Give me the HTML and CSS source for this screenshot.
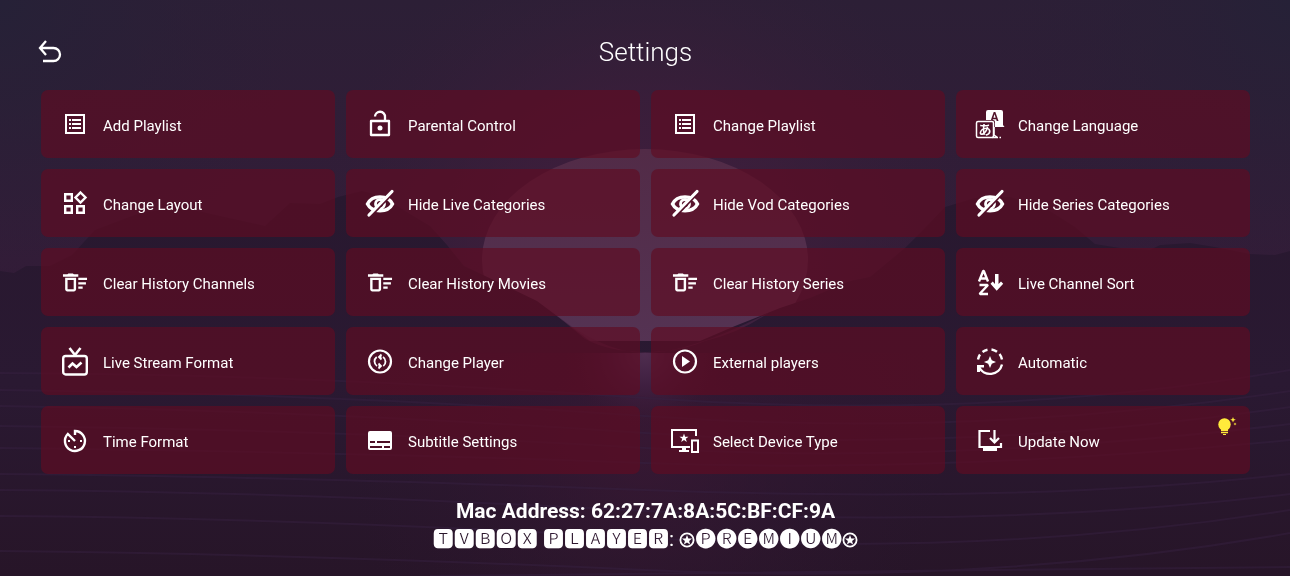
FILE: index.html
```html
<!DOCTYPE html>
<html lang="en">
<head>
<meta charset="utf-8">
<title>Settings</title>
<link rel="stylesheet" href="styles.css">
</head>
<body>
<svg class="scene" viewBox="0 0 1290 576" preserveAspectRatio="none" aria-hidden="true">
  <defs>
    <linearGradient id="sky" x1="0" y1="0" x2="0" y2="1"><stop offset="0" stop-color="#2c1f36"/><stop offset=".45" stop-color="#331c38"/><stop offset="1" stop-color="#2a1830"/></linearGradient>
    <radialGradient id="glow" gradientUnits="userSpaceOnUse" cx="645" cy="270" r="340"><stop offset="0" stop-color="#471e42"/><stop offset=".5" stop-color="#3d1e3b" stop-opacity=".7"/><stop offset="1" stop-color="#331e37" stop-opacity="0"/></radialGradient>
    <linearGradient id="sun" x1="0" y1="0" x2="0" y2="1"><stop offset="0" stop-color="#522b47"/><stop offset="1" stop-color="#553455"/></linearGradient>
    <linearGradient id="land" x1="0" y1="0" x2="0" y2="1"><stop offset="0" stop-color="#28182f"/><stop offset=".5" stop-color="#2a1932"/><stop offset="1" stop-color="#271528"/></linearGradient>
    <radialGradient id="water" gradientUnits="userSpaceOnUse" cx="645" cy="354" r="80"><stop offset="0" stop-color="#4f2d4f"/><stop offset=".4" stop-color="#3f1f40"/><stop offset="1" stop-color="#361730" stop-opacity="0"/></radialGradient>
    <radialGradient id="shore" gradientUnits="userSpaceOnUse" cx="645" cy="440" r="300"><stop offset="0" stop-color="#3a1834" stop-opacity=".8"/><stop offset="1" stop-color="#2d1630" stop-opacity="0"/></radialGradient>
    <radialGradient id="cornerL" gradientUnits="userSpaceOnUse" cx="0" cy="0" r="300"><stop offset="0" stop-color="#262137"/><stop offset="1" stop-color="#2b1f37" stop-opacity="0"/></radialGradient>
    <radialGradient id="cornerR" gradientUnits="userSpaceOnUse" cx="1290" cy="0" r="300"><stop offset="0" stop-color="#262137"/><stop offset="1" stop-color="#2b1f37" stop-opacity="0"/></radialGradient>
  </defs>
  <rect width="1290" height="576" fill="url(#sky)"/>
  <rect width="1290" height="576" fill="url(#glow)"/>
  <rect width="1290" height="576" fill="url(#cornerL)"/>
  <rect width="1290" height="576" fill="url(#cornerR)"/>
  <ellipse cx="645" cy="260" rx="163" ry="111" fill="url(#sun)"/>
  <path fill="url(#land)" d="M0 271L14 273 26 266 50 266 72 255 95 230 140 213 180 207 220 216 265 226 290 203 320 204 338 197 362 191 382 196 405 211 430 226 447 245 464 266 500 283 537 301 565 322 590 341H700L735 326 765 314 780 308 810 298 850 281 870 277 905 248 925 228 945 207 975 198 1010 197 1045 208 1075 227 1095 244 1120 248 1150 250 1160 245 1190 243 1215 247 1250 254 1275 255 1290 251V576H0z"/>
  <path fill="#4d2647" d="M545 306Q600 353 645 353T770 312Q740 333 705 341 680 352 645 352T585 339z" opacity=".6"/>
  <rect y="353" width="1290" height="223" fill="url(#shore)"/>
  <rect y="353" width="1290" height="223" fill="url(#water)"/>
  <g class="waves">
    <path d="M0 373Q300 374 645 398T1290 370M0 390Q320 393 645 416T1290 391M0 406Q330 411 645 433T1290 407M0 426Q350 430 645 448T1290 424M0 448Q350 452 645 463T1290 440M0 474Q260 476 645 490T1290 474M0 490Q300 492 645 511T1290 494M0 516Q300 518 645 538T1290 510M0 551Q300 554 645 570T1290 533M430 576Q860 572 1290 567"/>
  </g>
</svg>

<svg class="sprite" aria-hidden="true">
  <symbol id="i-list" viewBox="0 0 28 28"><path d="M5 5h18v18H5z" class="line" stroke-width="2"/><path d="M8 9h2v2H8zM11 9h9v2h-9zM8 13h2v2H8zM11 13h9v2h-9zM8 17h2v2H8zM11 17h9v2h-9z"/></symbol>
  <symbol id="i-eye" viewBox="0 0 30 30"><path d="M2.500 16C7 6.500 23 6.500 27.500 16 23 25 7 25 2.500 16z" class="line" stroke-width="3.400"/><circle cx="15" cy="16" r="4.500" class="line" stroke-width="2.800"/><path d="M5.500 28.500L28 5" stroke="#541029" stroke-width="2.500"/><path d="M4 27L27 3.500" class="line" stroke-width="3.200" stroke-linecap="round"/></symbol>
  <symbol id="i-clear" viewBox="-0.800 -1 25.600 25.600"><path d="M15 16h4v2h-4zm0-8h8v2h-8zm0 4h7v2h-7zM3 18.500c0 1.100.9 2 2 2h6c1.100 0 2-.9 2-2V8H3zm2.200-8.500h5.600v8.400H5.200zm4.800-6H6L5 4.600H1v2.400h14V4.600h-4z"/></symbol>
  <symbol id="i-star" viewBox="0 0 16 16"><circle cx="8" cy="8" r="6.600" class="line" stroke-width="1.800"/><path d="M8 3l1.300 3.500 3.700.1-2.900 2.300 1 3.600L8 10.400l-3.100 2.100 1-3.600L3 6.600l3.700-.1z"/></symbol>
</svg>

<main class="page">
  <header class="top">
    <button class="back" type="button" aria-label="Back"><svg viewBox="0 0 26 26"><path d="M9 2L3 9l6 7M3 9h13.500a6.500 6.500 0 0 1 0 13H6" class="line" stroke-width="2.300"/></svg></button>
    <h1 class="title">Settings</h1>
  </header>

  <div class="grid">
    <button class="card" type="button"><svg class="icon"><use href="#i-list"/></svg><span class="label">Add Playlist</span></button>
    <button class="card" type="button"><svg class="icon" viewBox="0 0 28 28"><path d="M5 11h18v14H5zM9 6.500a4.800 4.800 0 0 1 10 .5v4" class="line" stroke-width="2.300" stroke-linejoin="round"/><circle cx="14" cy="18" r="2.500"/></svg><span class="label">Parental Control</span></button>
    <button class="card" type="button"><svg class="icon"><use href="#i-list"/></svg><span class="label">Change Playlist</span></button>
    <button class="card" type="button"><svg class="icon wide" viewBox="0 0 30 30"><path d="M13 1h13q2 0 2 2v13l1.500 2H20v-5q0-2-2-2h-7V3q0-2 2-2z"/><text x="19.500" y="12" class="ink">A</text><rect x="1.500" y="12.500" width="17" height="16" rx="1.500" class="line" stroke-width="1.500"/><text x="10" y="25" class="kana">あ</text><path d="M19 18v8l3 2M17 28.500h6M24.500 28.500h1.500" class="line" stroke-width="1.500"/></svg><span class="label">Change Language</span></button>

    <button class="card" type="button"><svg class="icon" viewBox="0 0 28 28"><path d="M4.200 5.200h6.600v6.600H4.200zM4.200 17.200h6.600v6.600H4.200zM16.200 17.200h6.600v6.600h-6.600zM19.500 3.500l5 5-5 5-5-5z" class="line" stroke-width="2.400"/></svg><span class="label">Change Layout</span></button>
    <button class="card" type="button"><svg class="icon wide"><use href="#i-eye"/></svg><span class="label">Hide Live Categories</span></button>
    <button class="card" type="button"><svg class="icon wide"><use href="#i-eye"/></svg><span class="label">Hide Vod Categories</span></button>
    <button class="card" type="button"><svg class="icon wide"><use href="#i-eye"/></svg><span class="label">Hide Series Categories</span></button>

    <button class="card" type="button"><svg class="icon"><use href="#i-clear"/></svg><span class="label">Clear History Channels</span></button>
    <button class="card" type="button"><svg class="icon"><use href="#i-clear"/></svg><span class="label">Clear History Movies</span></button>
    <button class="card" type="button"><svg class="icon"><use href="#i-clear"/></svg><span class="label">Clear History Series</span></button>
    <button class="card" type="button"><svg class="icon wide" viewBox="0 0 30 30"><path d="M4 14.500L8.200 4h.6L13 14.500M5.500 11.500h6M4.500 18h8v.5l-7.500 8v.5h8" class="line" stroke-width="2.400" stroke-linejoin="bevel"/><path d="M20 7h3.500v10l2.500-2.500 2.200 2.200-6.500 7-6.200-7 2.200-2.200 2.300 2.500z"/></svg><span class="label">Live Channel Sort</span></button>

    <button class="card" type="button"><svg class="icon wide" viewBox="0 0 30 30"><rect x="3.200" y="10" width="23.600" height="18.500" rx="2.500" class="line" stroke-width="2.400"/><path d="M9.500 2l5.500 7 5.500-7M8.500 21.500l4-4 4 3.500 5-4.500" class="line" stroke-width="2.600"/></svg><span class="label">Live Stream Format</span></button>
    <button class="card" type="button"><svg class="icon" viewBox="0 0 28 28"><circle cx="14" cy="14.500" r="11" class="line" stroke-width="2.200"/><path d="M11 19a5.500 5.500 0 0 1-.3-9M17 10a5.500 5.500 0 0 1 .3 9M15.500 7.500L13 10l2.500 2.500M12.500 21.500l2.500-2.500-2.500-2.500M13 10h2.500M15 19h-2.500" class="line" stroke-width="1.800"/></svg><span class="label">Change Player</span></button>
    <button class="card" type="button"><svg class="icon" viewBox="0 0 28 28"><circle cx="14" cy="14.500" r="11" class="line" stroke-width="2.200"/><path d="M11 9v11l8-5.500z"/></svg><span class="label">External players</span></button>
    <button class="card" type="button"><svg class="icon wide" viewBox="0 0 30 30"><path d="M3 13.500a12 12 0 0 1 2-5M7.500 6a12 12 0 0 1 5-2.300M16.500 3.500a12 12 0 0 1 5.500 2.300M24.500 8a12 12 0 0 1 2.500 5.500M27 18.500A12.300 12.300 0 0 1 4 21" class="line" stroke-width="2.400"/><path d="M2 19h7v2.500H5V26H2zM15 10l1.800 4.200L21 16l-4.200 1.800L15 22l-1.800-4.200L9 16l4.200-1.800z"/></svg><span class="label">Automatic</span></button>

    <button class="card" type="button"><svg class="icon" viewBox="0 0 28 28"><path d="M14 9V5a10 10 0 1 1-7.200 3l7.200 7" class="line" stroke-width="2.400"/><path d="M7 14h2v2H7zM19 14h2v2h-2zM13 20h2v2h-2z"/></svg><span class="label">Time Format</span></button>
    <button class="card" type="button"><svg class="icon" viewBox="0 0 28 28"><path fill-rule="evenodd" d="M4 5h20q2 0 2 2v15q0 2-2 2H4q-2 0-2-2V7q0-2 2-2zm0 10v2h5v-2zm7 0v2h13v-2zM4 20v2h12v-2zm14 0v2h6v-2z"/></svg><span class="label">Subtitle Settings</span></button>
    <button class="card" type="button"><svg class="icon wide" viewBox="0 0 30 30"><path d="M26 11V5H2v17h18M22 15.500h6V27h-6z" class="line" stroke-width="2"/><path d="M12 22h4v3h3v2H9v-2h3zM14 8.500l1.100 3.200h3.400l-2.700 2.100 1 3.300-2.800-2-2.800 2 1-3.300-2.700-2.100h3.400z"/></svg><span class="label">Select Device Type</span></button>
    <button class="card" type="button"><svg class="icon" viewBox="0 0 28 28"><path d="M14 5H3.500v16h21.500v-4M18.500 4v12M14 12l4.500 4.500 4.500-4.500" class="line" stroke-width="2.200"/><path d="M7 21h14v4H7z"/></svg><span class="label">Update Now</span>
      <svg class="tip" viewBox="0 0 20 20" aria-hidden="true"><circle cx="7.500" cy="7.500" r="6.200"/><path d="M4 11h7v3H4zM4 14.700h7v1.500H4zM6 17h3v1H6zM16 0l.8 2 2 .8-2 .8-.8 2-.8-2-2-.8 2-.8zM18 5.500l.5 1 1 .5-1 .5-.5 1-.5-1-1-.5 1-.5z"/></svg>
    </button>
  </div>

  <footer class="foot">
    <p class="mac">Mac Address: 62:27:7A:8A:5C:BF:CF:9A</p>
    <p class="brand">🆃🆅🅱🅾🆇 🅿🅻🅰🆈🅴🆁<b>:</b> <svg class="star"><use href="#i-star"/></svg>🅟🅡🅔🅜🅘🅤🅜<svg class="star"><use href="#i-star"/></svg></p>
  </footer>
</main>
</body>
</html>
```

FILE: styles.css
```css
* { box-sizing: border-box; }

body {
  margin: 0;
  min-height: 100vh;
  background: #2a1830;
  color: #fff;
  font-family: Roboto, "Noto Sans CJK JP", sans-serif;
}

.scene {
  position: fixed;
  inset: 0;
  width: 100%;
  height: 100%;
  z-index: -1;
}

.waves {
  fill: none;
  stroke: #35203f;
  stroke-width: 2;
  opacity: .5;
}

.sprite { display: none; }

.line {
  fill: none;
  stroke: currentColor;
}

.page { padding: 36px 40px 0 41px; }

.top {
  display: grid;
  grid-template-columns: 32px 1fr 32px;
  align-items: center;
  height: 32px;
  margin-bottom: 22px;
}

.back {
  width: 26px;
  height: 26px;
  margin-left: -4px;
  padding: 0;
  border: 0;
  background: none;
  color: #fff;
}

.back svg {
  display: block;
  width: 26px;
  height: 26px;
}

.title {
  margin: 0;
  text-align: center;
  font-size: 26px;
  font-weight: 300;
  line-height: 32px;
}

.grid {
  display: grid;
  grid-template-columns: repeat(4, 1fr);
  grid-auto-rows: minmax(68px, auto);
  gap: 11px;
}

.card {
  position: relative;
  display: flex;
  align-items: center;
  gap: 14px;
  padding: 0 20px;
  border: 0;
  border-radius: 7px;
  background: rgba(96, 12, 34, .67);
  color: #fff;
  font: 400 15px/20px Roboto, sans-serif;
  text-align: left;
}

.label { padding-top: 3px; }

.icon {
  flex: none;
  width: 28px;
  height: 28px;
  fill: currentColor;
}

.wide {
  width: 30px;
  height: 30px;
  margin: 0 -1px;
}

.ink,
.kana {
  font-family: Roboto, sans-serif;
  font-weight: 700;
  text-anchor: middle;
}

.ink {
  font-size: 12px;
  fill: #50122a;
}

.kana {
  font-family: "Noto Sans CJK JP", sans-serif;
  font-size: 13px;
}

.tip {
  position: absolute;
  top: 11px;
  right: 13px;
  width: 20px;
  height: 20px;
  fill: #ffeb3b;
}

.foot {
  padding-top: 23px;
  text-align: center;
}

.foot p {
  margin: 0;
  font-size: 21px;
  line-height: 28px;
}

.foot .mac { font-weight: 700; }

.foot .brand { font-weight: 300; }

.star {
  width: 16px;
  height: 16px;
  fill: currentColor;
  vertical-align: -2px;
}
```
